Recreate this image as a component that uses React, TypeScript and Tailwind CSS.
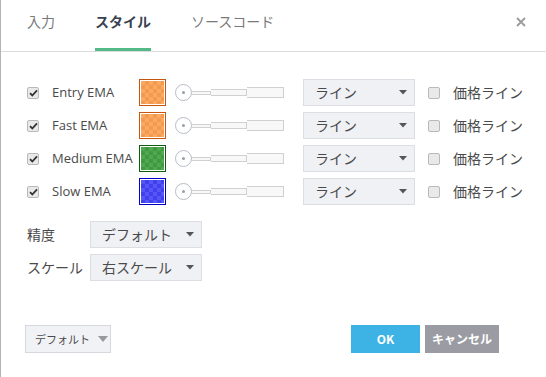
import React from "react";

type EmaRow = {
  label: string;
  border: string;
  fill: string;
};

const rows: EmaRow[] = [
  {
    label: "Entry EMA",
    border: "border-[#c4560f]",
    fill: "bg-[repeating-conic-gradient(#f59a4c_0_25%,#f9a964_0_50%)] bg-[length:8px_8px]",
  },
  {
    label: "Fast EMA",
    border: "border-[#c4560f]",
    fill: "bg-[repeating-conic-gradient(#f59a4c_0_25%,#f9a964_0_50%)] bg-[length:8px_8px]",
  },
  {
    label: "Medium EMA",
    border: "border-[#0d5c0d]",
    fill: "bg-[repeating-conic-gradient(#409b40_0_25%,#52a752_0_50%)] bg-[length:8px_8px]",
  },
  {
    label: "Slow EMA",
    border: "border-[#0000c8]",
    fill: "bg-[repeating-conic-gradient(#4040f0_0_25%,#5656f4_0_50%)] bg-[length:8px_8px]",
  },
];

const jp = "font-['Noto_Sans_CJK_JP','Noto_Sans',sans-serif]";
const latin = "font-['Open_Sans','Noto_Sans_CJK_JP',sans-serif]";

function Check({ checked }: { checked: boolean }) {
  return (
    <span className="w-[12px] h-[12px] rounded-[2px] border border-[#b9b9b9] bg-[#e9e9e9] flex items-center justify-center shrink-0">
      {checked && (
        <svg width="9" height="8" viewBox="0 0 9 8">
          <path d="M1 4.2 L3.3 6.5 L8 1.3" fill="none" stroke="#333" strokeWidth="1.8" />
        </svg>
      )}
    </span>
  );
}

function Caret() {
  return (
    <svg width="8" height="5" viewBox="0 0 8 5" className="shrink-0">
      <path d="M0 0 H8 L4 4.5 Z" fill="#555" />
    </svg>
  );
}

function SelectBox({ text, width }: { text: string; width: string }) {
  return (
    <div
      className={`${width} h-[27px] border border-[#dcdee3] bg-[#f0f1f5] flex items-center justify-between pl-[11px] pr-[7px] text-[14px] text-[#4a4a4a] ${jp}`}
    >
      <span>{text}</span>
      <Caret />
    </div>
  );
}

function WidthSlider() {
  return (
    <div className="flex items-center w-[110px] h-[27px]">
      <span className="w-[17px] h-[17px] rounded-full border border-[#b8bcc6] bg-white flex items-center justify-center shrink-0">
        <span className="w-[3px] h-[3px] rounded-full bg-[#9a9ea8]" />
      </span>
      <span className="w-[19px] h-[4px] border border-l-0 border-[#d0d0d0] bg-[#f8f8f8]" />
      <span className="w-[36px] h-[7px] border border-l-0 border-[#d0d0d0] bg-[#f8f8f8]" />
      <span className="w-[37px] h-[11px] border border-l-0 border-[#d0d0d0] bg-[#f8f8f8]" />
    </div>
  );
}

export default function App() {
  return (
    <div className="w-[546px] h-[377px] bg-white border-l border-[#b4b4b4] flex flex-col overflow-hidden">
      {/* Tabs */}
      <div className="h-[52px] border-b border-[#dcdcdc] flex items-stretch pl-[26px] pr-[20px]">
        <div className={`flex items-stretch gap-[40px] text-[14px] ${jp}`}>
          <span className="flex items-center text-[#7a7a7a] border-b-[3px] border-transparent pb-[5px]">入力</span>
          <span className="flex items-center text-[#3a4250] font-bold border-b-[3px] border-[#53b987] pb-[5px]">スタイル</span>
          <span className="flex items-center text-[#7a7a7a] border-b-[3px] border-transparent pb-[5px]">ソースコード</span>
        </div>
        <div className="ml-auto flex items-center pb-[7px]">
          <svg width="10" height="10" viewBox="0 0 10 10">
            <path d="M1 1 L9 9 M9 1 L1 9" stroke="#9a9a9a" strokeWidth="1.8" />
          </svg>
        </div>
      </div>

      {/* EMA rows */}
      <div className="flex flex-col gap-[6px] pt-[27px] pl-[26px]">
        {rows.map((row) => (
          <div key={row.label} className="flex items-center h-[27px]">
            <Check checked />
            <span className={`ml-[13px] w-[87px] text-[13px] text-[#4a4a4a] ${latin}`}>{row.label}</span>
            <span className={`w-[27px] h-[27px] border ${row.border} p-px bg-white shrink-0`}>
              <span className={`block w-full h-full ${row.fill}`} />
            </span>
            <span className="ml-[9px]">
              <WidthSlider />
            </span>
            <span className="ml-[18px]">
              <SelectBox text="ライン" width="w-[112px]" />
            </span>
            <span className="ml-[13px]">
              <Check checked={false} />
            </span>
            <span className={`ml-[13px] text-[14px] text-[#4a4a4a] ${jp}`}>価格ライン</span>
          </div>
        ))}
      </div>

      {/* Precision / scale */}
      <div className={`flex flex-col gap-[6px] pt-[16px] pl-[26px] text-[14px] text-[#4a4a4a] ${jp}`}>
        <div className="flex items-center">
          <span className="w-[63px]">精度</span>
          <SelectBox text="デフォルト" width="w-[112px]" />
        </div>
        <div className="flex items-center">
          <span className="w-[63px]">スケール</span>
          <SelectBox text="右スケール" width="w-[112px]" />
        </div>
      </div>

      {/* Footer */}
      <div className={`mt-auto mb-[24px] flex items-center pl-[24px] pr-[47px] ${jp}`}>
        <div className="w-[86px] h-[28px] border border-[#d6d8dd] bg-[#f1f2f6] flex items-center pl-[9px] gap-[8px] text-[11px] text-[#4a4a4a] whitespace-nowrap">
          <span>デフォルト</span>
          <svg width="10" height="6" viewBox="0 0 10 6" className="shrink-0">
            <path d="M0 0 H10 L5 6 Z" fill="#999" />
          </svg>
        </div>
        <div className="ml-auto flex gap-[5px]">
          <button className="w-[69px] h-[28px] bg-[#3cb3e4] text-white text-[12px] font-bold flex items-center justify-center">
            OK
          </button>
          <button className="w-[74px] h-[28px] bg-[#9b9ca3] text-white text-[12px] font-bold flex items-center justify-center">
            キャンセル
          </button>
        </div>
      </div>
    </div>
  );
}
